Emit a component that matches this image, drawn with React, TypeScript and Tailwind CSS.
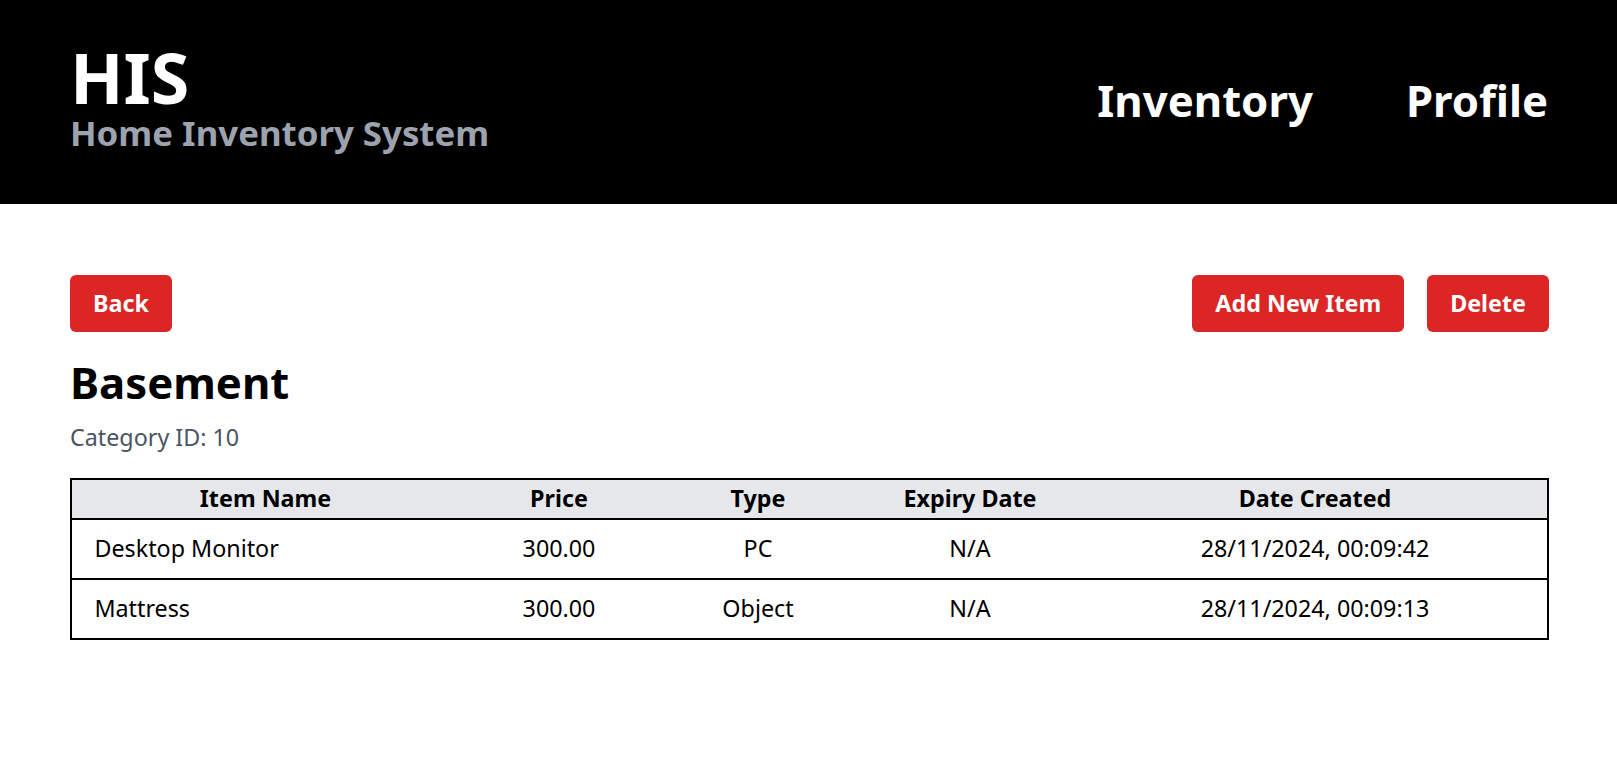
import React from 'react';

const rows = [
  { name: 'Desktop Monitor', price: '300.00', type: 'PC', expiry: 'N/A', created: '28/11/2024, 00:09:42' },
  { name: 'Mattress', price: '300.00', type: 'Object', expiry: 'N/A', created: '28/11/2024, 00:09:13' },
];

const App: React.FC = () => {
  return (
    <div className="min-h-screen bg-white text-black" style={{ fontFamily: '"Noto Sans", "Open Sans", sans-serif' }}>
      {/* Header */}
      <header className="bg-black h-[204px] pl-[70px] pr-[69px] flex items-center justify-between">
        <div className="flex flex-col -mt-[6px]">
          <h1 className="text-[70px] leading-[68px] font-bold text-white">HIS</h1>
          <p className="text-[34.8px] leading-[44px] font-bold text-[#9ca3af]">Home Inventory System</p>
        </div>
        <nav className="flex items-center gap-[93px] -mt-[4px]">
          <a className="text-[43.7px] leading-[50px] font-bold text-white">Inventory</a>
          <a className="text-[43.7px] leading-[50px] font-bold text-white">Profile</a>
        </nav>
      </header>

      {/* Content */}
      <main className="pl-[70px] pr-[68px] pt-[71px]">
        <div className="flex items-center justify-between">
          <button className="bg-[#dc2626] text-white font-bold text-[23.3px] leading-[33.6px] px-[23px] py-[11.5px] rounded-[6px]">
            Back
          </button>
          <div className="flex items-center gap-[23px]">
            <button className="bg-[#dc2626] text-white font-bold text-[23.3px] leading-[33.6px] px-[23px] py-[11.5px] rounded-[6px]">
              Add New Item
            </button>
            <button className="bg-[#dc2626] text-white font-bold text-[23.3px] leading-[33.6px] px-[23px] py-[11.5px] rounded-[6px]">
              Delete
            </button>
          </div>
        </div>

        <h2 className="mt-[25px] text-[43.7px] leading-[50.4px] font-bold">Basement</h2>
        <p className="mt-[14px] text-[23.3px] leading-[33.6px] text-[#4b5563]">Category ID: 10</p>

        <table className="mt-[23px] w-full table-fixed border-collapse border-2 border-black text-[23.3px]">
          <colgroup>
            <col className="w-[388px]" />
            <col className="w-[200px]" />
            <col className="w-[198px]" />
            <col className="w-[226px]" />
            <col />
          </colgroup>
          <thead>
            <tr className="bg-[#e5e7eb] border-b-2 border-black">
              <th className="font-bold text-center leading-[33.6px] py-[2.5px]">Item Name</th>
              <th className="font-bold text-center leading-[33.6px] py-[2.5px]">Price</th>
              <th className="font-bold text-center leading-[33.6px] py-[2.5px]">Type</th>
              <th className="font-bold text-center leading-[33.6px] py-[2.5px]">Expiry Date</th>
              <th className="font-bold text-center leading-[33.6px] py-[2.5px]">Date Created</th>
            </tr>
          </thead>
          <tbody>
            {rows.map((r) => (
              <tr key={r.created} className="border-b-2 border-black">
                <td className="text-left px-[22.4px] py-[12.2px] leading-[33.6px]">{r.name}</td>
                <td className="text-center py-[12.2px] leading-[33.6px]">{r.price}</td>
                <td className="text-center py-[12.2px] leading-[33.6px]">{r.type}</td>
                <td className="text-center py-[12.2px] leading-[33.6px]">{r.expiry}</td>
                <td className="text-center py-[12.2px] leading-[33.6px]">{r.created}</td>
              </tr>
            ))}
          </tbody>
        </table>
      </main>
    </div>
  );
};

export default App;
